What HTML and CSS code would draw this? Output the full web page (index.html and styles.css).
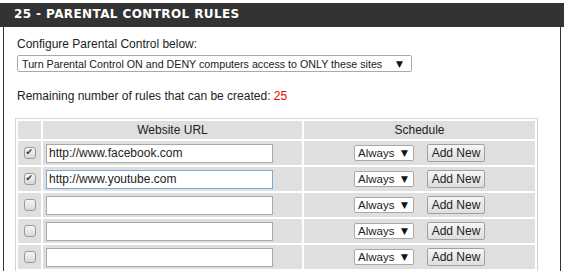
FILE: index.html
```html
<!DOCTYPE html>
<html lang="en">
  <head>
    <meta charset="UTF-8" />
    <title>Parental Control Rules</title>
    <link rel="stylesheet" href="styles.css">
  </head>
  <body>
    <div class="section">
      <h2 class="section-title">25 - PARENTAL CONTROL RULES</h2>

      <div class="section-body">
        <p class="label">Configure Parental Control below:</p>

        <div class="select-wrap mode">
          <select class="select">
            <option>Turn Parental Control ON and DENY computers access to ONLY these sites</option>
          </select>
          <span class="arrow">&#9660;</span>
        </div>

        <p class="remaining">Remaining number of rules that can be created: <span class="count">25</span></p>

        <table class="rules">
          <thead>
            <tr>
              <th class="col-check"></th>
              <th class="col-url">Website URL</th>
              <th>Schedule</th>
            </tr>
          </thead>
          <tbody>
            <tr>
              <td class="col-check"><input type="checkbox" class="check" checked></td>
              <td class="col-url"><input type="text" class="url" value="http://www.facebook.com"></td>
              <td>
                <div class="schedule">
                  <div class="select-wrap small">
                    <select class="select"><option>Always</option></select>
                    <span class="arrow">&#9660;</span>
                  </div>
                  <button class="add-btn">Add New</button>
                </div>
              </td>
            </tr>
            <tr>
              <td class="col-check"><input type="checkbox" class="check" checked></td>
              <td class="col-url"><input type="text" class="url focused" value="http://www.youtube.com"></td>
              <td>
                <div class="schedule">
                  <div class="select-wrap small">
                    <select class="select"><option>Always</option></select>
                    <span class="arrow">&#9660;</span>
                  </div>
                  <button class="add-btn">Add New</button>
                </div>
              </td>
            </tr>
            <tr>
              <td class="col-check"><input type="checkbox" class="check"></td>
              <td class="col-url"><input type="text" class="url" value=""></td>
              <td>
                <div class="schedule">
                  <div class="select-wrap small">
                    <select class="select"><option>Always</option></select>
                    <span class="arrow">&#9660;</span>
                  </div>
                  <button class="add-btn">Add New</button>
                </div>
              </td>
            </tr>
            <tr>
              <td class="col-check"><input type="checkbox" class="check"></td>
              <td class="col-url"><input type="text" class="url" value=""></td>
              <td>
                <div class="schedule">
                  <div class="select-wrap small">
                    <select class="select"><option>Always</option></select>
                    <span class="arrow">&#9660;</span>
                  </div>
                  <button class="add-btn">Add New</button>
                </div>
              </td>
            </tr>
            <tr>
              <td class="col-check"><input type="checkbox" class="check"></td>
              <td class="col-url"><input type="text" class="url" value=""></td>
              <td>
                <div class="schedule">
                  <div class="select-wrap small">
                    <select class="select"><option>Always</option></select>
                    <span class="arrow">&#9660;</span>
                  </div>
                  <button class="add-btn">Add New</button>
                </div>
              </td>
            </tr>
          </tbody>
        </table>
      </div>
    </div>
  </body>
</html>
```

FILE: styles.css
```css
* {
  box-sizing: border-box;
}

body {
  margin: 0;
  font-family: "Liberation Sans", Arial, sans-serif;
  font-size: 12px;
  color: #222;
  background-color: #fff;
  overflow: hidden;
}

.section {
  padding-top: 3px;
  height: 100vh;
  display: flex;
  flex-direction: column;
}

.section-title {
  margin: 0;
  height: 24px;
  flex-shrink: 0;
  line-height: 23px;
  padding-left: 14px;
  background-color: #333;
  color: #fff;
  font-family: "DejaVu Sans", Verdana, sans-serif;
  font-size: 12px;
  font-weight: bold;
  letter-spacing: 0.4px;
}

.section-body {
  flex: 1;
  margin: 0 3px;
  border-left: 1px solid #333;
  border-right: 1px solid #333;
  padding: 10px 0 0 11px;
  overflow: hidden;
}

.label,
.remaining {
  margin: 0 0 0 2px;
  line-height: 14px;
}

.remaining {
  margin-top: 17px;
}

.count {
  color: #e00;
}

/* selects */
.select-wrap {
  position: relative;
  display: inline-block;
}

.select {
  appearance: none;
  -webkit-appearance: none;
  display: block;
  margin: 0;
  padding: 0 0 0 4px;
  border: 1px solid #a9a9a9;
  border-radius: 2px;
  background-color: #fff;
  font-family: "Liberation Sans", Arial, sans-serif;
  font-size: 12px;
  color: #222;
  outline: none;
}

.arrow {
  position: absolute;
  top: 50%;
  transform: translateY(-50%);
  font-family: "DejaVu Sans", sans-serif;
  font-size: 9px;
  color: #111;
  pointer-events: none;
}

.mode {
  display: block;
  margin: 4px 0 0 2px;
  width: 395px;
}

.mode .select {
  width: 395px;
  height: 17px;
  font-size: 10.7px;
}

.mode .arrow {
  right: 9px;
}

.small .select {
  width: 60px;
  height: 16px;
  padding-left: 3px;
  font-size: 11.5px;
}

.small .arrow {
  right: 6px;
}

/* table */
.rules {
  margin-top: 15px;
  width: 523px;
  border: 1px solid #d4d4d4;
  border-spacing: 2px;
  background-color: #fff;
}

.rules th,
.rules td {
  background-color: #dfdfdf;
  padding: 0;
}

.rules th {
  height: 18px;
  font-weight: normal;
  font-size: 12px;
  color: #222;
}

.rules td {
  height: 24px;
}

.col-check {
  width: 23px;
  text-align: center;
}

.col-url {
  width: 259px;
}

.rules td.col-url {
  padding-left: 3px;
}

.check {
  appearance: none;
  -webkit-appearance: none;
  display: block;
  width: 12px;
  height: 12px;
  margin: 0 auto;
  border: 1px solid #9a9a9a;
  border-radius: 3px;
  background: linear-gradient(#f6f6f6, #d8d8d8);
  position: relative;
}

.check:checked::before {
  content: "\2714";
  position: absolute;
  left: 1px;
  top: -1px;
  font-family: "DejaVu Sans", sans-serif;
  font-size: 9px;
  color: #333;
}

.url {
  display: block;
  width: 227px;
  height: 19px;
  margin: 0;
  padding: 0 2px;
  border: 1px solid #a9a9a9;
  background-color: #fff;
  font-family: "Liberation Sans", Arial, sans-serif;
  font-size: 12px;
  color: #222;
  outline: none;
}

.url.focused {
  border-color: #7ea6d8;
}

.schedule {
  display: flex;
  justify-content: center;
  align-items: center;
  gap: 13px;
}

.add-btn {
  width: 58px;
  height: 18px;
  margin: 0;
  padding: 0;
  border: 1px solid #a0a0a0;
  border-radius: 2px;
  background: linear-gradient(#f6f6f6, #dedede);
  font-family: "Liberation Sans", Arial, sans-serif;
  font-size: 12px;
  color: #222;
}
```
